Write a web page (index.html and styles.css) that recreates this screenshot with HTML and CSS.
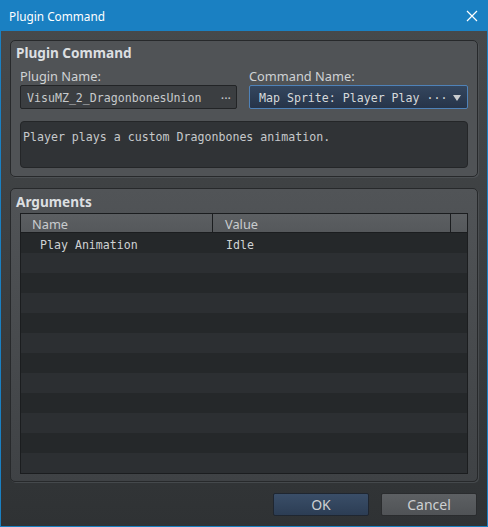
FILE: index.html
```html
<!DOCTYPE html>
<html>
<head>
<meta charset="utf-8">
<link rel="stylesheet" href="styles.css">
</head>
<body>
<div class="window">
  <div class="titlebar">
    <span class="title">Plugin Command</span>
    <svg class="close" width="12" height="12" viewBox="0 0 12 12"><path d="M1 1 L11 11 M11 1 L1 11" stroke="#fff" stroke-width="1.2" fill="none"/></svg>
  </div>
  <div class="body">
    <section class="group group-cmd">
      <div class="group-title">Plugin Command</div>
      <div class="fields">
        <div class="field">
          <div class="label">Plugin Name:</div>
          <div class="input"><span class="mono">VisuMZ_2_DragonbonesUnion</span><span class="dots">···</span></div>
        </div>
        <div class="field">
          <div class="label">Command Name:</div>
          <div class="combo"><span class="mono">Map Sprite: Player Play ···</span><span class="arrow"></span></div>
        </div>
      </div>
      <div class="desc mono">Player plays a custom Dragonbones animation.</div>
    </section>
    <section class="group group-args">
      <div class="group-title">Arguments</div>
      <div class="table">
        <div class="thead">
          <div class="th th-name">Name</div>
          <div class="th th-value">Value</div>
          <div class="th th-end"></div>
        </div>
        <div class="rows">
          <div class="row"><span class="cell-name mono">Play Animation</span><span class="cell-value mono">Idle</span></div>
          <div class="row"></div>
          <div class="row"></div>
          <div class="row"></div>
          <div class="row"></div>
          <div class="row"></div>
          <div class="row"></div>
          <div class="row"></div>
          <div class="row"></div>
          <div class="row"></div>
          <div class="row"></div>
          <div class="row"></div>
        </div>
      </div>
    </section>
    <div class="buttons">
      <button class="btn btn-ok">OK</button>
      <button class="btn btn-cancel">Cancel</button>
    </div>
  </div>
</div>
</body>
</html>
```
FILE: styles.css
```css
* { box-sizing: border-box; }
html, body { margin: 0; padding: 0; }
body {
  width: 488px;
  height: 527px;
  overflow: hidden;
  font-family: "Noto Sans", "Open Sans", sans-serif;
  font-size: 12.8px;
  color: #cfd2d4;
}
.window {
  width: 488px;
  height: 527px;
  background: #1a80c2;
  padding: 0 1px 1px 1px;
  display: flex;
  flex-direction: column;
}
.titlebar {
  height: 31px;
  flex: none;
  display: flex;
  align-items: center;
  justify-content: space-between;
  padding: 0 10px 0 8px;
  color: #ffffff;
  font-size: 11.8px;
}
.close { display: block; margin-right: -1px; }
.body {
  flex: 1;
  background: linear-gradient(#46494b, #2f3234);
  padding: 9px 9px 10px 9px;
  display: flex;
  flex-direction: column;
  gap: 11px;
}
.group {
  border: 1px solid #27292b;
  border-radius: 5px;
  background: linear-gradient(#515457, #3f4245);
  box-shadow: 1px 1px 0 rgba(90,94,97,0.5);
  padding: 2px 9px 8px 9px;
}
.group-cmd {
  height: 137px;
  background: #505356;
}
.group-args {
  height: 294px;
  padding-top: 3px;
  padding-bottom: 7px;
}
.group-title {
  font-weight: bold;
  font-size: 13.6px;
  line-height: 19px;
  height: 18px;
  color: #dcdfe1;
  margin-left: -4px;
}
.fields {
  display: grid;
  grid-template-columns: 217px 1fr;
  column-gap: 12px;
  margin-top: 6px;
}
.label {
  line-height: 18px;
  height: 16px;
  margin-bottom: 2px;
  color: #cfd2d4;
}
.mono {
  font-family: "DejaVu Sans Mono", "Liberation Mono", monospace;
  font-size: 11.6px;
}
.input {
  height: 24px;
  border: 1px solid #222426;
  border-radius: 2px;
  background: #3b3e41;
  display: flex;
  align-items: center;
  justify-content: space-between;
  padding: 2px 5px 0 6px;
  color: #c6c9cb;
}
.dots { color: #c6c9cb; }
.combo {
  height: 24px;
  border: 1px solid #4f82b8;
  border-radius: 2px;
  background: linear-gradient(#34465e, #263449);
  display: flex;
  align-items: center;
  justify-content: space-between;
  padding: 2px 6px 0 9px;
  color: #d6d9db;
}
.arrow {
  width: 0;
  height: 0;
  border-left: 4px solid transparent;
  border-right: 4px solid transparent;
  border-top: 6px solid #c9ccce;
  margin-top: -1px;
}
.desc {
  margin-top: 12px;
  height: 47px;
  border: 1px solid #242628;
  border-radius: 4px;
  background: #303336;
  padding: 6px 2px;
  line-height: 18px;
  color: #c6c9cb;
}
.table {
  margin-top: 3px;
  border: 1px solid #1b1d1f;
  background: #2c2f32;
}
.thead {
  display: grid;
  grid-template-columns: 192px 1fr 16px;
  height: 19px;
  border-bottom: 1px solid #1b1d1f;
  background: linear-gradient(#5c5f62, #55585b);
}
.th {
  line-height: 20px;
  height: 18px;
  color: #c9ccce;
  border-right: 1px solid #1b1d1f;
}
.th-name { padding-left: 11px; }
.th-value { padding-left: 12px; }
.th-end { border-right: none; }
.rows { display: flex; flex-direction: column; }
.row {
  height: 20px;
  display: grid;
  grid-template-columns: 193px 1fr;
  align-items: center;
  padding-top: 3px;
  color: #cfd2d4;
}
.row:nth-child(odd) { background: #25282a; }
.row:nth-child(even) { background: #2c2f32; }
.cell-name { padding-left: 19px; }
.cell-value { padding-left: 12px; }
.buttons {
  display: flex;
  justify-content: flex-end;
  gap: 12px;
  margin-right: 1px;
}
.btn {
  width: 96px;
  height: 23px;
  border-radius: 2px;
  font-family: "Noto Sans", "Open Sans", sans-serif;
  font-size: 14px;
  color: #cdd0d2;
  padding: 0;
}
.btn-ok {
  border: 1px solid #1f2630;
  background: linear-gradient(#3a4e68, #2c3d54);
}
.btn-cancel {
  border: 1px solid #2a2c2e;
  background: linear-gradient(#5d6063, #505356);
}
```
